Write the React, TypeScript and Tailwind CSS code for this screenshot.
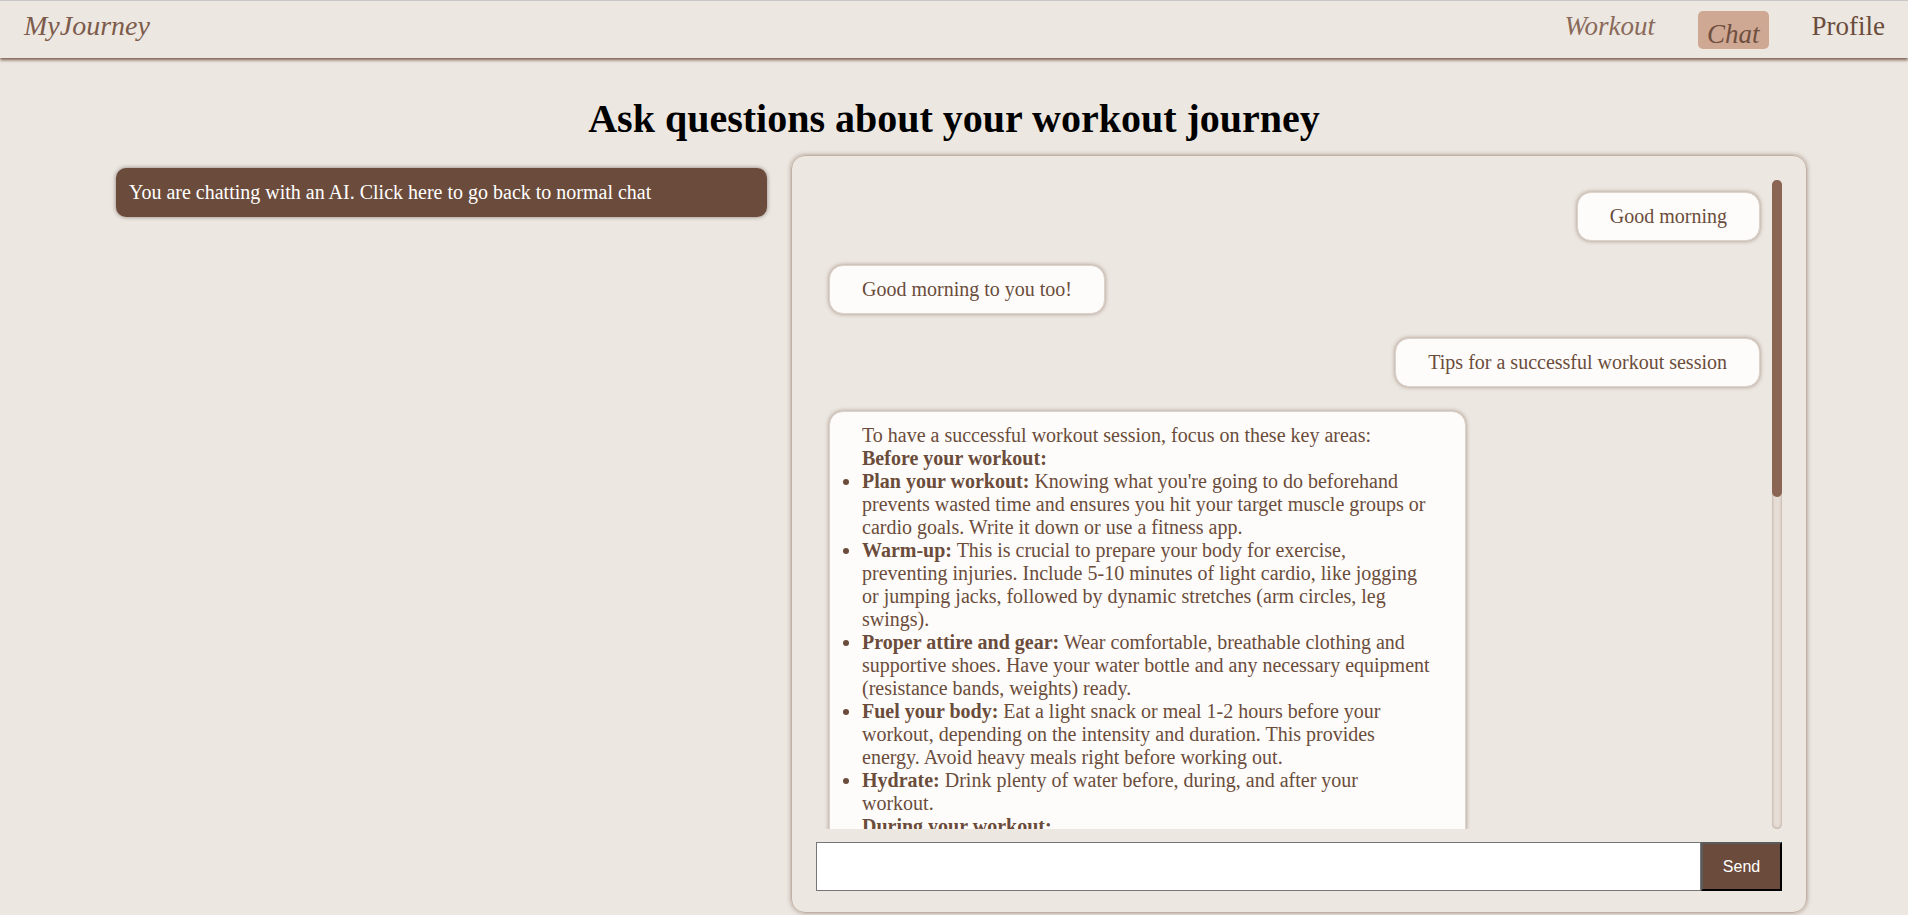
import { useState } from "react"

type Msg = { id: number; from: "user" | "ai"; text?: string; rich?: boolean }

const MESSAGES: Msg[] = [
    { id: 1, from: "user", text: "Good morning" },
    { id: 2, from: "ai", text: "Good morning to you too!" },
    { id: 3, from: "user", text: "Tips for a successful workout session" },
    { id: 4, from: "ai", rich: true },
]

// Long AI answer, clipped by the message area
function TipsAnswer() {
    return (
        <div>
            <p>To have a successful workout session, focus on these key areas:</p>
            <p className="font-bold">Before your workout:</p>
            <ul className="list-disc">
                <li><b>Plan your workout:</b> Knowing what you're going to do beforehand prevents wasted time and ensures you hit your target muscle groups or cardio goals. Write it down or use a fitness app.</li>
                <li><b>Warm-up:</b> This is crucial to prepare your body for exercise, preventing injuries. Include 5-10 minutes of light cardio, like jogging or jumping jacks, followed by dynamic stretches (arm circles, leg swings).</li>
                <li><b>Proper attire and gear:</b> Wear comfortable, breathable clothing and supportive shoes. Have your water bottle and any necessary equipment (resistance bands, weights) ready.</li>
                <li><b>Fuel your body:</b> Eat a light snack or meal 1-2 hours before your workout, depending on the intensity and duration. This provides energy. Avoid heavy meals right before working out.</li>
                <li><b>Hydrate:</b> Drink plenty of water before, during, and after your workout.</li>
            </ul>
            <p className="font-bold">During your workout:</p>
        </div>
    )
}

export default function App() {
    const [draft, setDraft] = useState("")

    return (
        <div className="min-h-screen bg-[#ece7e1] font-['Liberation_Serif','Times_New_Roman',serif]">
            {/* Header */}
            <header className="h-[58px] flex items-start justify-between border-t border-[#c8c8c8] shadow-[0_2px_3px_rgba(110,78,62,0.9)]">
                <div className="pl-[24px] pt-[9px] text-[28px] leading-[32px] italic text-[#7c5b4b]">MyJourney</div>
                <nav className="flex items-start gap-[43px] pt-[10px] pr-[23px] text-[27px] leading-[30px]">
                    <span className="italic text-[#8a6a5a]">Workout</span>
                    <span className="h-[38px] px-[9px] pt-[8px] rounded-[5px] bg-[#cfa893] italic text-[#6e4f40]">Chat</span>
                    <span className="text-[#6b4c3b]">Profile</span>
                </nav>
            </header>

            <h1 className="mt-[38px] text-center text-[40px] leading-[46px] font-bold text-black">
                Ask questions about your workout journey
            </h1>

            <div className="flex gap-[24px] pl-[116px] mt-[13px]">
                {/* Left column */}
                <div className="w-[651px] pt-[13px]">
                    <button className="w-full h-[49px] pl-[13px] text-left rounded-[10px] bg-[#6b4b3b] text-white text-[20px] leading-[23px] shadow-[0_0_4px_rgba(60,40,30,0.55)]">
                        You are chatting with an AI. Click here to go back to normal chat
                    </button>
                </div>

                {/* Chat panel */}
                <div className="w-[1016px] h-[758px] flex flex-col border border-[#c2b0a4] rounded-[14px] px-6 pt-6 pb-[21px] shadow-[0_0_4px_rgba(100,72,58,0.5)]">
                    <div className="h-[649px] flex">
                        <div className="flex-1 overflow-hidden flex flex-col gap-6 pl-[13px] pr-[12px] py-3">
                            {MESSAGES.map(m => (
                                <div
                                    key={m.id}
                                    className={`shrink-0 w-fit max-w-[637px] px-8 py-3 rounded-[14px] border border-[#ddd2ca] bg-[#fdfcfa] text-[20px] leading-[23px] text-[#6b4c3b] shadow-[0_0_4px_rgba(107,76,59,0.55)] ${m.from === "user" ? "self-end" : "self-start"}`}
                                >
                                    {m.rich ? <TipsAnswer /> : m.text}
                                </div>
                            ))}
                        </div>

                        {/* Scrollbar */}
                        <div className="w-[10px] h-full rounded-full bg-[#e6ddd6] shadow-[inset_0_0_3px_rgba(120,95,80,0.6)]">
                            <div className="h-[317px] rounded-full bg-[#8b6553]" />
                        </div>
                    </div>

                    <div className="flex mt-[13px] h-[49px]">
                        <input
                            value={draft}
                            onChange={e => setDraft(e.target.value)}
                            className="flex-1 h-full bg-white border border-[#767676] px-2 text-[16px] outline-none"
                        />
                        <button className="w-[81px] h-full bg-[#6b4b3b] text-white text-[16px] font-['Liberation_Sans',Arial,sans-serif] border-2 border-t-[#5b5b5b] border-l-[#5b5b5b] border-r-black border-b-black">
                            Send
                        </button>
                    </div>
                </div>
            </div>
        </div>
    )
}
